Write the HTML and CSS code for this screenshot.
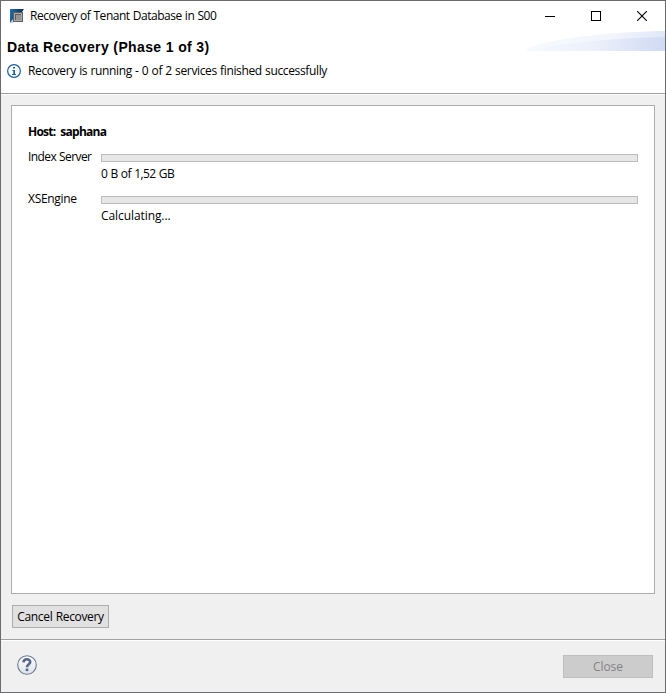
FILE: index.html
```html
<!DOCTYPE html>
<html lang="en">
<head>
<meta charset="utf-8">
<title>Recovery of Tenant Database in S00</title>
<link rel="stylesheet" href="styles.css">
</head>
<body>
<div class="window">
  <header class="header">
    <div class="titlebar">
      <svg class="app-icon" width="14" height="14" viewBox="0 0 14 14">
        <defs><linearGradient id="app" x1="0" y1="0" x2="1" y2="0.3"><stop offset="0" stop-color="#2370b0"/><stop offset="1" stop-color="#0b2850"/></linearGradient></defs>
        <path d="M0 0H14L12 3L3 11L0 14Z" fill="url(#app)"/>
        <path d="M0 14L3 10V14Z" fill="#c3d7e9"/>
        <rect x="3" y="3" width="10" height="10" fill="#606060"/>
        <rect x="4" y="4" width="8" height="8" fill="#aaa"/>
        <rect x="5" y="5" width="6" height="6" fill="#606060"/>
        <rect x="6" y="6" width="5" height="5" fill="#959595"/>
      </svg>
      <span class="window-title">Recovery of Tenant Database in S00</span>
      <div class="controls">
        <svg width="10" height="10" viewBox="0 0 10 10"><path d="M0 5.5H10" stroke="#000"/></svg>
        <svg width="10" height="10" viewBox="0 0 10 10"><rect x=".5" y=".5" width="9" height="9" fill="none" stroke="#000"/></svg>
        <svg width="10" height="10" viewBox="0 0 10 10"><path d="M0 0L10 10M10 0L0 10" stroke="#000" stroke-width="1.1"/></svg>
      </div>
    </div>
    <svg class="swoosh" width="140" height="20" viewBox="0 0 140 20">
      <defs>
        <linearGradient id="back"><stop offset="0" stop-color="#f7f9fd"/><stop offset=".6" stop-color="#f2f6fc"/><stop offset="1" stop-color="#e0e8f7"/></linearGradient>
        <linearGradient id="front"><stop offset="0" stop-color="#f7f9fd"/><stop offset=".5" stop-color="#ebf0fa"/><stop offset="1" stop-color="#d0daf4"/></linearGradient>
      </defs>
      <path d="M0 20C12 9 78 1 140 0V20Z" fill="url(#back)"/>
      <path d="M0 20C38 12 85 7 140 6V20Z" fill="url(#front)"/>
    </svg>
    <h1 class="heading">Data Recovery (Phase 1 of 3)</h1>
    <div class="status">
      <svg width="14" height="14" viewBox="0 0 14 14">
        <circle cx="7" cy="7" r="6.35" fill="#fff" stroke="#1c5c9c" stroke-width="1.2"/>
        <path d="M6 3H8V4.5H6ZM5.5 6H8V10H9V11H5V10H6.3V7H5.5Z" fill="#1c5c9c"/>
      </svg>
      <span class="status-text">Recovery is running - 0 of 2 services finished successfully</span>
    </div>
  </header>
  <main class="content">
    <section class="panel">
      <h2 class="host">Host: saphana</h2>
      <div class="service">
        <span class="name index-name">Index Server</span>
        <div><div class="bar"></div><div class="detail size">0 B of 1,52 GB</div></div>
      </div>
      <div class="service">
        <span class="name engine-name">XSEngine</span>
        <div><div class="bar"></div><div class="detail calculating">Calculating...</div></div>
      </div>
    </section>
    <button class="button cancel"><span>Cancel Recovery</span></button>
  </main>
  <footer class="footer">
    <svg width="20" height="20" viewBox="0 0 20 20">
      <defs><linearGradient id="help" x2="0" y2="1"><stop stop-color="#fff"/><stop offset="1" stop-color="#dfe1e5"/></linearGradient></defs>
      <circle cx="10" cy="10" r="9.3" fill="url(#help)" stroke="#6b7b98" stroke-width="1.1"/>
      <path d="M6.5 7.4C6.7 3.4 13.2 3.3 13.2 7C13.2 9.3 10 9.2 10 12.3" fill="none" stroke="#53668b" stroke-width="2.6"/>
      <rect x="8.7" y="13.6" width="2.6" height="2.5" fill="#53668b"/>
    </svg>
    <button class="button close" disabled><span>Close</span></button>
  </footer>
</div>
</body>
</html>
```
FILE: styles.css
```css
* { box-sizing: border-box; }
body {
  margin: 0;
  font-family: "Open Sans", "Noto Sans", sans-serif;
  font-size: 12px;
  line-height: 16px;
  color: #000;
  white-space: nowrap;
}
svg { display: block; flex: none; }
.window {
  display: flex;
  flex-direction: column;
  width: 666px;
  height: 693px;
  border: 1px solid #6b6b6d;
  background: #f0f0f0;
}
.header {
  position: relative;
  height: 93px;
  background: #fff;
  border-bottom: 1px solid #a0a0a0;
}
.titlebar {
  display: flex;
  align-items: center;
  height: 29px;
  padding: 0 18px 0 9px;
}
.window-title { margin-left: 6px; letter-spacing: -0.48px; word-spacing: 0.5px; }
.controls { display: flex; gap: 36px; margin-left: auto; }
.swoosh { position: absolute; right: 0; top: 30px; }
.heading {
  position: relative;
  margin: 8px 0 0 6px;
  font: bold 14px/18px "Liberation Sans", sans-serif;
  letter-spacing: 0.37px;
}
.status {
  display: flex;
  align-items: center;
  gap: 7px;
  margin-top: 7px;
  padding-left: 6px;
}
.status-text { letter-spacing: -0.36px; word-spacing: 0.5px; }
.content {
  display: flex;
  flex-direction: column;
  height: 546px;
  border-top: 1px solid #fff;
  border-bottom: 1px solid #a0a0a0;
  padding: 10px 10px 0;
}
.panel {
  height: 489px;
  padding: 18px 16px;
  background: #fff;
  border: 1px solid #abadb3;
}
.host {
  margin: 0 0 9px;
  font-size: 12px;
  line-height: 16px;
  letter-spacing: -0.75px;
  word-spacing: 2.5px;
}
.service {
  display: grid;
  grid-template-columns: 73px 1fr;
  height: 42px;
}
.index-name { letter-spacing: -0.6px; word-spacing: 0.5px; }
.engine-name { letter-spacing: -0.3px; }
.size { letter-spacing: -0.55px; word-spacing: 0.6px; }
.calculating { letter-spacing: -0.08px; }
.bar {
  height: 8px;
  margin: 5px 0 4px;
  border: 1px solid #bcbcbc;
  background: #e6e6e6;
}
.button {
  font: inherit;
  height: 23px;
  padding: 0;
  border: 1px solid #adadad;
  background: #e1e1e1;
  color: #000;
}
.cancel { width: 97px; margin: 11px 0 0 1px; letter-spacing: -0.33px; word-spacing: 0.5px; }
.footer {
  display: flex;
  align-items: flex-start;
  justify-content: space-between;
  flex: 1;
  border-top: 1px solid #fff;
  padding: 14px 12px 0 16px;
}
.close {
  width: 90px;
  border-color: #bfbfbf;
  background: #ccc;
  color: #838383;
  letter-spacing: -0.1px;
}
```
